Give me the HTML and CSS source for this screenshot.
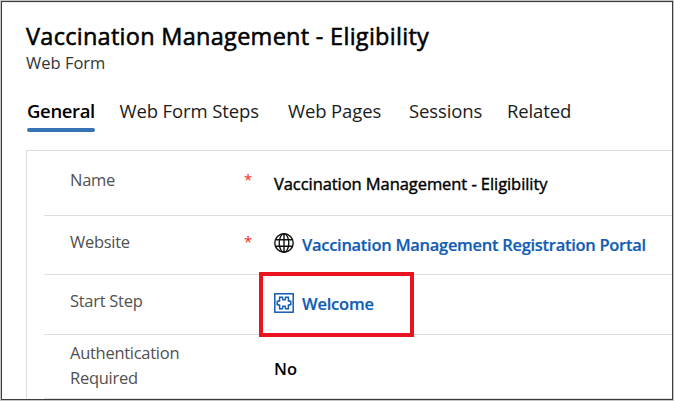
FILE: index.html
```html
<!DOCTYPE html>
<html lang="en">
<head>
<meta charset="utf-8">
<title>Vaccination Management - Eligibility</title>
<link rel="stylesheet" href="styles.css">
</head>
<body>
<div class="window">
  <header class="header">
    <h1 class="title">Vaccination Management - Eligibility</h1>
    <div class="subtitle">Web Form</div>
  </header>
  <nav class="tabs">
    <span class="tab active">General</span>
    <span class="tab steps">Web Form Steps</span>
    <span class="tab pages">Web Pages</span>
    <span class="tab sessions">Sessions</span>
    <span class="tab related">Related</span>
  </nav>
  <main class="panel">
    <div class="row name">
      <span class="label">Name</span><span class="required">*</span>
      <span class="value">Vaccination Management - Eligibility</span>
    </div>
    <div class="row website">
      <span class="label">Website</span><span class="required">*</span>
      <span class="value link">
        <svg class="icon globe" viewBox="0 0 20 20"><circle cx="10" cy="10" r="9.2"/><ellipse cx="10" cy="10" rx="4.8" ry="9.2"/><path d="M10 1v18M1.8 6.7h16.4M1.8 13.3h16.4"/></svg>
        <span class="portal">Vaccination Management Registration Portal</span>
      </span>
    </div>
    <div class="row start">
      <span class="label">Start Step</span><span></span>
      <span class="value link">
        <svg class="icon" viewBox="0 0 20 20"><rect x=".8" y=".8" width="18.4" height="18.4"/><path d="M5.6 4.2h2.8l.5 2.6h2.2l.5-2.6h2.8v3.6l2.4.6v3.2l-2.4.6v3.6h-2.8l-.5-2.6H8.900l-.5 2.600H5.600v-3.600l-2.400-.6V8.400l2.400-.6z"/></svg>
        <span class="welcome">Welcome</span>
      </span>
      <div class="highlight"></div>
    </div>
    <div class="row auth">
      <span class="label">Authentication<br>Required</span><span></span>
      <span class="value">No</span>
    </div>
  </main>
</div>
</body>
</html>
```

FILE: styles.css
```css
* { box-sizing: border-box; }
body {
  margin: 0;
  height: 401px;
  padding: 1px;
  overflow: hidden;
  background: #c4c6c3;
  color: #000;
  font-family: "Open Sans", "Noto Sans", sans-serif;
}
.window {
  width: 672px;
  height: 399px;
  border: 1px solid #3c3c3c;
  background: #fff;
  overflow: hidden;
}
.header {
  height: 87px;
  padding: 18px 0 0 24px;
  border-top: 1px solid #ececec;
  white-space: nowrap;
}
.title {
  margin: 0;
  font-size: 23.5px;
  font-weight: 400;
  letter-spacing: .28px;
  line-height: 30px;
  -webkit-text-stroke: .55px #000;
}
.subtitle { margin-top: 1px; font-size: 16.5px; line-height: 22px; color: #333; }
.tabs {
  display: flex;
  height: 61px;
  padding-left: 25px;
  font-size: 18.5px;
  letter-spacing: -.12px;
  line-height: 43px;
  white-space: nowrap;
  color: #1b1b1b;
}
.tab { flex: none; height: 43px; }
.active {
  width: 68px;
  margin-right: 24.5px;
  color: #000;
  font-weight: 600;
  letter-spacing: -.35px;
}
.active::after {
  content: "";
  display: block;
  height: 4px;
  margin-top: -4px;
  border-radius: 2px;
  background: #3673b5;
}
.steps { width: 168.5px; }
.pages { width: 121px; }
.sessions { width: 98px; }
.panel {
  height: 260px;
  margin-left: 24px;
  padding-left: 17px;
  border-top: 1px solid #dcdcdc;
  border-left: 1px solid #dcdcdc;
}
.row {
  position: relative;
  display: grid;
  grid-template-columns: 174px 30px 1fr;
  padding-left: 26px;
  border-bottom: 1px solid #dfdfdf;
  font-size: 16.5px;
  line-height: 25px;
  white-space: nowrap;
}
.name { height: 65px; padding-top: 16px; }
.website { height: 59px; padding-top: 13px; }
.start { height: 60px; padding-top: 13px; }
.auth { height: 64px; padding-top: 5px; }
.label { color: #505050; letter-spacing: -.28px; }
.required { color: #f22; font-size: 15px; }
.value { font-weight: 600; padding-top: 3px; }
.name .value {
  padding-top: 4px;
  font-weight: 400;
  letter-spacing: -.07px;
  -webkit-text-stroke: .4px #000;
}
.auth .value { padding-top: 16px; }
.link { display: flex; height: 28px; color: #115cb5; }
.portal { letter-spacing: -.29px; -webkit-text-stroke: .2px #115cb5; }
.welcome { letter-spacing: -.2px; -webkit-text-stroke: .2px #115cb5; }
.icon {
  width: 20px;
  height: 20px;
  margin: 2px 8px 0 0;
  fill: none;
  stroke: #115cb5;
  stroke-width: 1.5;
}
.globe { margin-top: 1px; stroke: #111; stroke-width: 1.4; }
.highlight {
  position: absolute;
  left: 215px;
  top: -3px;
  width: 155px;
  height: 65px;
  border: 4px solid #e91420;
}
```
